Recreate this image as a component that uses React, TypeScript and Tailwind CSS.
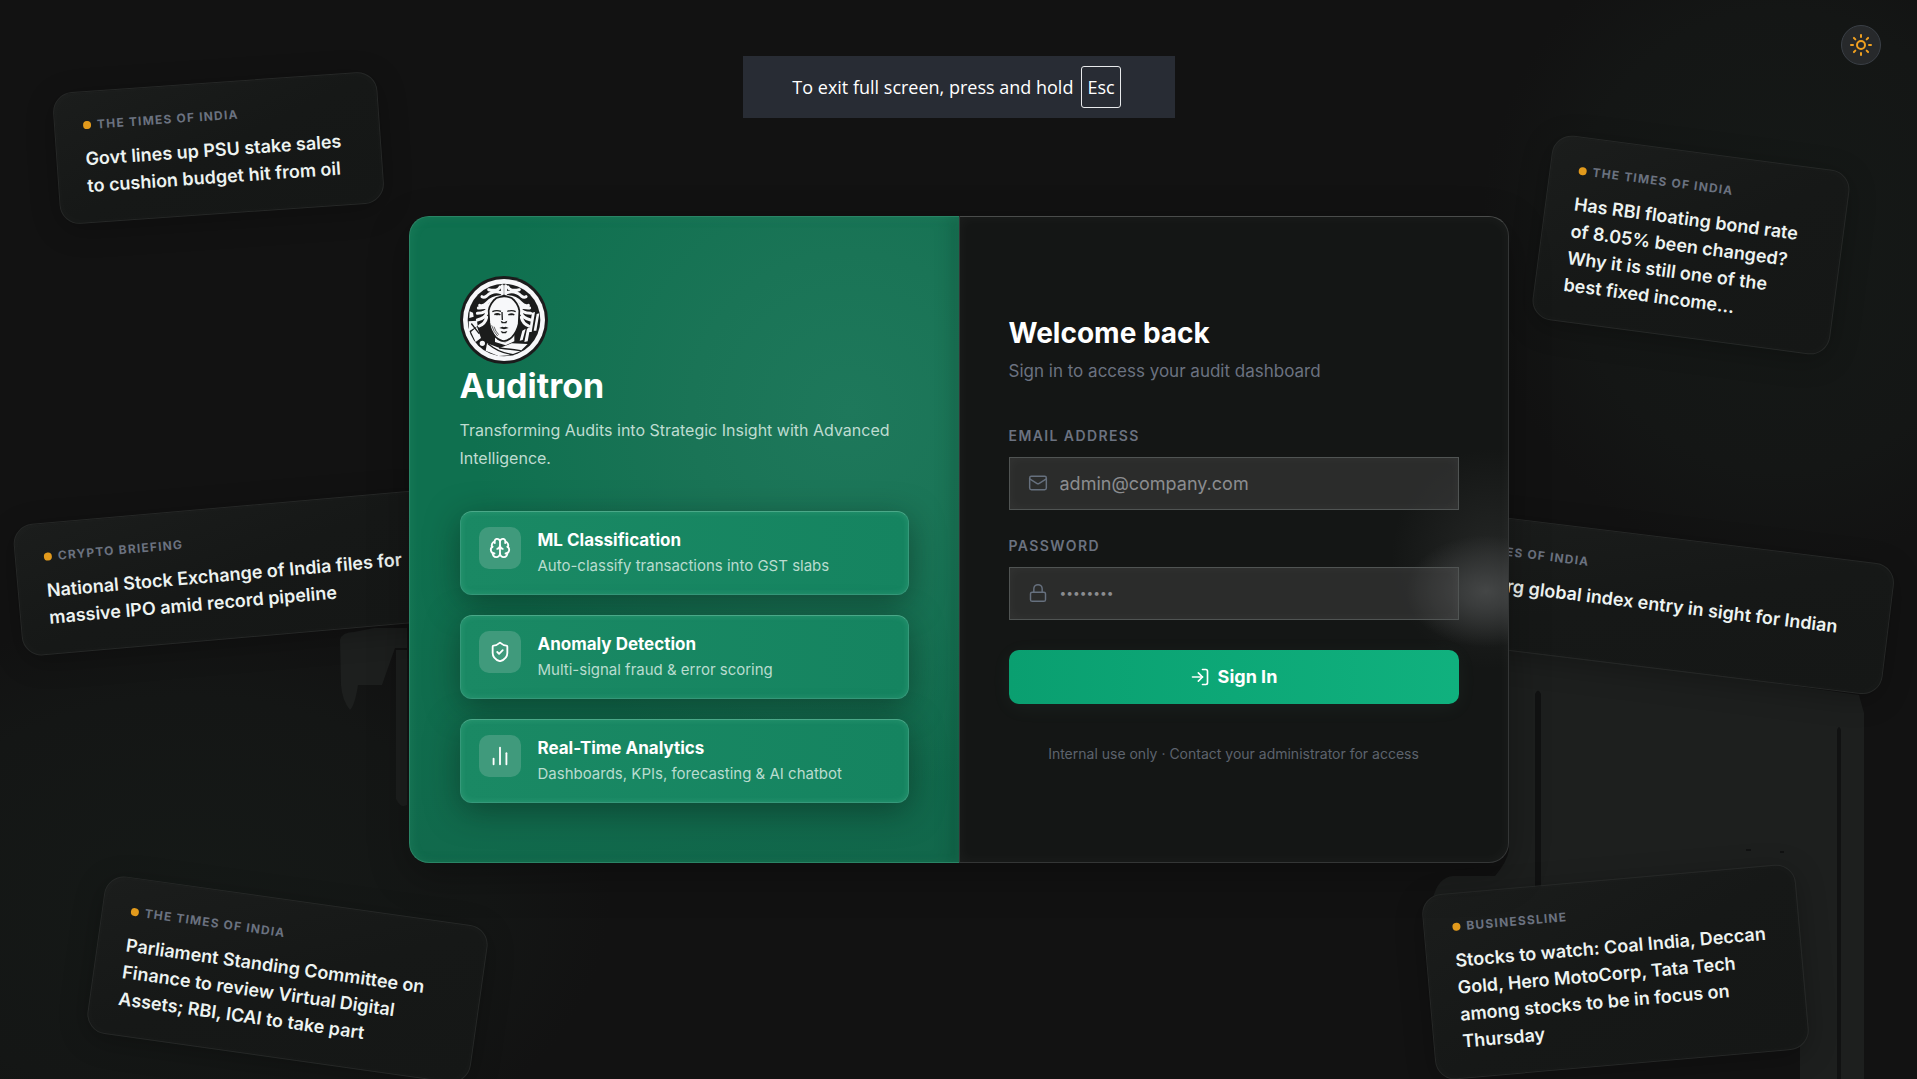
import { BarChart2, Brain, Lock, LogIn, Mail, ShieldCheck, Sun } from "lucide-react";
import type { LucideIcon } from "lucide-react";

interface NewsItem {
  source: string;
  lines: string[];
  place: string;
}

interface Feature {
  icon: LucideIcon;
  title: string;
  text: string;
}

const NEWS: NewsItem[] = [
  {
    source: "The Times of India",
    lines: ["Govt lines up PSU stake sales", "to cushion budget hit from oil"],
    place: "left-[56px] top-[82px] w-[325px] -rotate-4",
  },
  {
    source: "Crypto Briefing",
    lines: ["National Stock Exchange of India files for", "massive IPO amid record pipeline"],
    place: "left-[17px] top-[507px] w-[420px] -rotate-5",
  },
  {
    source: "The Times of India",
    lines: [
      "Parliament Standing Committee on",
      "Finance to review Virtual Digital",
      "Assets; RBI, ICAI to take part",
    ],
    place: "left-[94px] top-[900px] w-[387px] rotate-8",
  },
  {
    source: "The Times of India",
    lines: [
      "Has RBI floating bond rate",
      "of 8.05% been changed?",
      "Why it is still one of the",
      "best fixed income…",
    ],
    place: "right-[76px] top-[152px] w-[300px] rotate-[7.5deg]",
  },
  {
    source: "The Times of India",
    lines: ["Bloomberg global index entry in sight for Indian", "bonds"],
    place: "right-[27px] top-[535px] w-[490px] rotate-7",
  },
  {
    source: "BusinessLine",
    lines: [
      "Stocks to watch: Coal India, Deccan",
      "Gold, Hero MotoCorp, Tata Tech",
      "among stocks to be in focus on",
      "Thursday",
    ],
    place: "right-[114px] top-[879px] w-[375px] -rotate-5",
  },
];

const FEATURES: Feature[] = [
  {
    icon: Brain,
    title: "ML Classification",
    text: "Auto-classify transactions into GST slabs",
  },
  {
    icon: ShieldCheck,
    title: "Anomaly Detection",
    text: "Multi-signal fraud & error scoring",
  },
  {
    icon: BarChart2,
    title: "Real-Time Analytics",
    text: "Dashboards, KPIs, forecasting & AI chatbot",
  },
];

export default function App() {
  return (
    <main className="relative flex min-h-screen items-center justify-center overflow-hidden bg-[#121212] p-6 font-['Inter',sans-serif] text-white">
      <Backdrop />
      {NEWS.map((item) => (
        <NewsCard key={item.lines[0]} item={item} />
      ))}

      <div className="relative grid w-full max-w-[1100px] grid-cols-2 rounded-[20px] shadow-[0_12px_40px_rgba(0,0,0,0.3)]">
        <BrandPanel />
        <LoginPanel />
      </div>

      <FullScreenHint />
      <button
        type="button"
        aria-label="Switch to light mode"
        className="absolute top-[25px] right-9 flex size-10 items-center justify-center rounded-full border border-[#3a3f46] bg-[#27292b] text-[#f0a020]"
      >
        <Sun className="size-6" strokeWidth={2} />
      </button>
    </main>
  );
}

function Backdrop() {
  return (
    <svg
      className="absolute inset-0 size-full"
      viewBox="0 0 1917 1079"
      preserveAspectRatio="none"
      aria-hidden="true"
    >
      <defs>
        <radialGradient id="glow">
          <stop offset="0" stopColor="#151917" />
          <stop offset="0.7" stopColor="#141615" />
          <stop offset="1" stopColor="#121212" />
        </radialGradient>
      </defs>
      <ellipse cx="190" cy="900" rx="420" ry="290" fill="url(#glow)" />
      <ellipse cx="1780" cy="240" rx="300" ry="330" fill="url(#glow)" />
      <g fill="#1d1f1e">
        <path d="M340 640q2-8 14-8l20-4h33v20h-12l-13 37h-24q-3 20-8 25-8-10-9-25z" />
        <path d="M396 650h11v155q-6 4-11-6z" />
        <path d="M1509 645l350 50 5 18v366h-64v-40l-360-60-7-82q6-20 20-21h42q12-14 14-26z" />
      </g>
      <g fill="#111212">
        <path d="M1535 694q3-7 6 0v210h-6z" />
        <path d="M1837 730q2-6 4 0v349h-4z" />
        <path d="M1746 849h5v2h-5zM1780 851h4v2h-4z" />
      </g>
    </svg>
  );
}

function NewsCard({ item }: { item: NewsItem }) {
  return (
    <article
      className={`absolute rounded-[20px] border border-[#262827] bg-linear-to-br from-[#1b1d1c] via-[#161817] to-[#151716] px-7 pt-[25px] pb-[23px] shadow-[0_6px_28px_rgba(0,0,0,0.25),inset_0_0_16px_rgba(255,255,255,0.02)] ${item.place}`}
    >
      <div className="flex items-center gap-[6px] text-[12px] leading-[16px] font-bold tracking-widest text-[#6b7280] uppercase">
        <span className="size-2 rounded-full bg-[#e29a1c]" />
        {item.source}
      </div>
      <h3 className="mt-3 text-[18px] leading-[27px] font-semibold text-[#edf3f1]">
        {item.lines.map((line) => (
          <span key={line} className="block whitespace-nowrap">
            {line}
          </span>
        ))}
      </h3>
    </article>
  );
}

function BrandPanel() {
  return (
    <section className="flex flex-col justify-center rounded-l-[20px] border border-r-0 border-[#2a8465] bg-[radial-gradient(circle_at_80%_30%,#1e785b_0%,#1a7456_25%,transparent_60%),linear-gradient(165deg,#0f704f_40%,#12674b)] px-[50px] py-[59px] shadow-[inset_1px_1px_10px_rgba(60,170,130,0.2),inset_-14px_0_20px_-10px_rgba(0,40,25,0.25)]">
      <Logo />
      <h1 className="text-[34px] leading-11 font-bold">Auditron</h1>
      <p className="mt-2 text-base leading-7 text-[#bfdcd1]">
        Transforming Audits into Strategic Insight with Advanced Intelligence.
      </p>
      <ul className="mt-[39px] flex flex-col gap-5">
        {FEATURES.map(({ icon: Icon, title, text }) => (
          <li
            key={title}
            className="flex items-start gap-[17px] rounded-xl border border-[#35997a] border-t-[#4aa888] bg-linear-to-r from-[#1a8964] to-[#158460] px-[18px] py-[15px] shadow-[0_8px_32px_rgba(10,35,25,0.5),inset_0_0_6px_rgba(120,220,180,0.2)]"
          >
            <span className="flex size-[42px] shrink-0 items-center justify-center rounded-[10px] bg-[#409a7c]">
              <Icon className="size-[22px]" strokeWidth={2} />
            </span>
            <div>
              <h2 className="text-[17px] leading-[26px] font-bold">{title}</h2>
              <p className="text-[15px] leading-[26px] text-[#b9dccf]">{text}</p>
            </div>
          </li>
        ))}
      </ul>
    </section>
  );
}

function LoginPanel() {
  return (
    <section className="flex flex-col justify-center rounded-r-[20px] border border-[#343636] border-t-[#4a4c4b] bg-[#141615] bg-[radial-gradient(ellipse_80px_56px_at_96%_58%,#444646,#3a3c3c_30%,transparent),radial-gradient(ellipse_100px_110px_at_97%_53%,#242625,transparent)] px-[49px] pb-1 shadow-[inset_0_0_14px_rgba(255,255,255,0.04)]">
      <h2 className="text-[28px] leading-[42px] font-bold">Welcome back</h2>
      <p className="mt-1 text-[17px] leading-[26px] text-[#6b7280]">
        Sign in to access your audit dashboard
      </p>
      <form className="mt-[42px] flex flex-col gap-[26px]" onSubmit={(e) => e.preventDefault()}>
        <Field
          id="email"
          label="Email address"
          type="email"
          placeholder="admin@company.com"
          icon={Mail}
          textClass="text-[18px]"
        />
        <Field
          id="password"
          label="Password"
          type="password"
          placeholder="••••••••"
          icon={Lock}
          textClass="text-[12px]"
        />
        <button
          type="submit"
          className="mt-1 flex h-[54px] items-center justify-center gap-2 rounded-[10px] bg-linear-to-r from-[#0a9f70] to-[#10b17e] text-[18px] font-bold shadow-[0_4px_20px_rgba(120,200,170,0.06)]"
        >
          <LogIn className="size-5" strokeWidth={2} />
          Sign In
        </button>
      </form>
      <p className="mt-10 text-center text-sm leading-5 text-[#5d636d]">
        Internal use only · Contact your administrator for access
      </p>
    </section>
  );
}

function Field({
  id,
  label,
  type,
  placeholder,
  icon: Icon,
  textClass,
}: {
  id: string;
  label: string;
  type: string;
  placeholder: string;
  icon: LucideIcon;
  textClass: string;
}) {
  return (
    <div className="flex flex-col gap-[11px]">
      <label
        htmlFor={id}
        className="text-[14px] leading-5 font-semibold tracking-widest text-[#6b7280] uppercase"
      >
        {label}
      </label>
      <div className="flex h-[53px] items-center gap-3 border border-[#505453] bg-[#474747]/45 px-[18px] shadow-[inset_0_0_12px_rgba(255,255,255,0.04)]">
        <Icon className="size-5 shrink-0 text-[#66707e]" strokeWidth={1.75} />
        <input
          id={id}
          type={type}
          placeholder={placeholder}
          className={`min-w-0 flex-1 bg-transparent text-white outline-none placeholder:text-[#8b8d90] ${textClass}`}
        />
      </div>
    </div>
  );
}

function FullScreenHint() {
  return (
    <div className="absolute top-14 left-1/2 flex h-[62px] w-[432px] -translate-x-1/2 items-center justify-center gap-2 bg-[#282c34] pr-1 font-['Open_Sans',sans-serif] text-[18px] whitespace-nowrap">
      To exit full screen, press and hold
      <kbd className="flex h-[42px] items-center rounded-[3px] border border-[#e8eaec] px-[5px] font-['Open_Sans',sans-serif]">
        Esc
      </kbd>
    </div>
  );
}

function HairLocks() {
  return (
    <path d="M154 49v24M147 53q-6 14-34 8M149 70q-22-8-42 10-8 6-14 2M150 82q-26 0-42 18-10 12-22 8M124 96q-12 22-42 20M113 112q-6 20-34 20M109 126q-4 20-30 26M107 144q-4 18-22 26" />
  );
}

function Logo() {
  return (
    <svg className="size-[88px]" viewBox="27 20 264 264" role="img" aria-label="Auditron logo">
      <circle cx="159" cy="152" r="132" fill="#1b1c1c" />
      <circle cx="159" cy="152" r="123" fill="#f7f8fa" />
      <circle cx="159" cy="152" r="109" fill="#1b1c1c" />
      <g fill="none" stroke="#f7f8fa" strokeWidth="9" strokeLinecap="round">
        <HairLocks />
        <g transform="translate(318) scale(-1 1)">
          <HairLocks />
        </g>
      </g>
      <g fill="#f7f8fa">
        {/* cloak and shoulder */}
        <path d="M56 126l10 4 2 12-13 4zM53 156l25-2 2 16-26 16zM60 188l18-16 12 34-16 12z" />
        <path d="M108 222l38 14 36-14 48 2-22 22-32 12-34 2-38-16z" />
        <path d="M132 190h58v26l-26 12-32-10z" />
        {/* columns */}
        <path d="M243 130l9-2-10 60h-8zM257 134l8-2-9 52h-8zM214 184l10-6-9 34-9 2zM228 178l10-6-8 44-10 2z" />
      </g>
      <path
        d="M113 124q3-22 23-38 12-5 23-5t23 5q20 16 23 38l-2 40q-5 24-21 40-13 11-23 11t-24-11q-17-18-20-44z"
        fill="#f7f8fa"
        stroke="#1b1c1c"
        strokeWidth="5"
      />
      <g fill="none" stroke="#1b1c1c" strokeWidth="4" strokeLinecap="round">
        <path d="M112 224q30 26 74 32M146 236q34 4 62 8M62 164l22 28" />
      </g>
      <g fill="none" stroke="#1b1c1c" strokeWidth="4">
        <path d="M124 127q12-6 26-1M169 126q14-5 25 1M130 136q10-6 18 1M172 137q10-6 18 0M153 128l1 24" />
        <path d="M122 168q6 20 18 32M129 172q4 14 14 24M138 209q10 8 26 9" strokeWidth="2" />
      </g>
      <path
        d="M149 154l10 5 10-5-3 8h-14zM145 176l9-4 5 2 5-2 9 4-14 4zM149 185l10 3 10-3-4 7h-12zM134 134h9v4h-9zM176 134h9v4h-9z"
        fill="#1b1c1c"
      />
      <circle cx="94" cy="222" r="10" fill="#f7f8fa" stroke="#1b1c1c" strokeWidth="4" />
    </svg>
  );
}
